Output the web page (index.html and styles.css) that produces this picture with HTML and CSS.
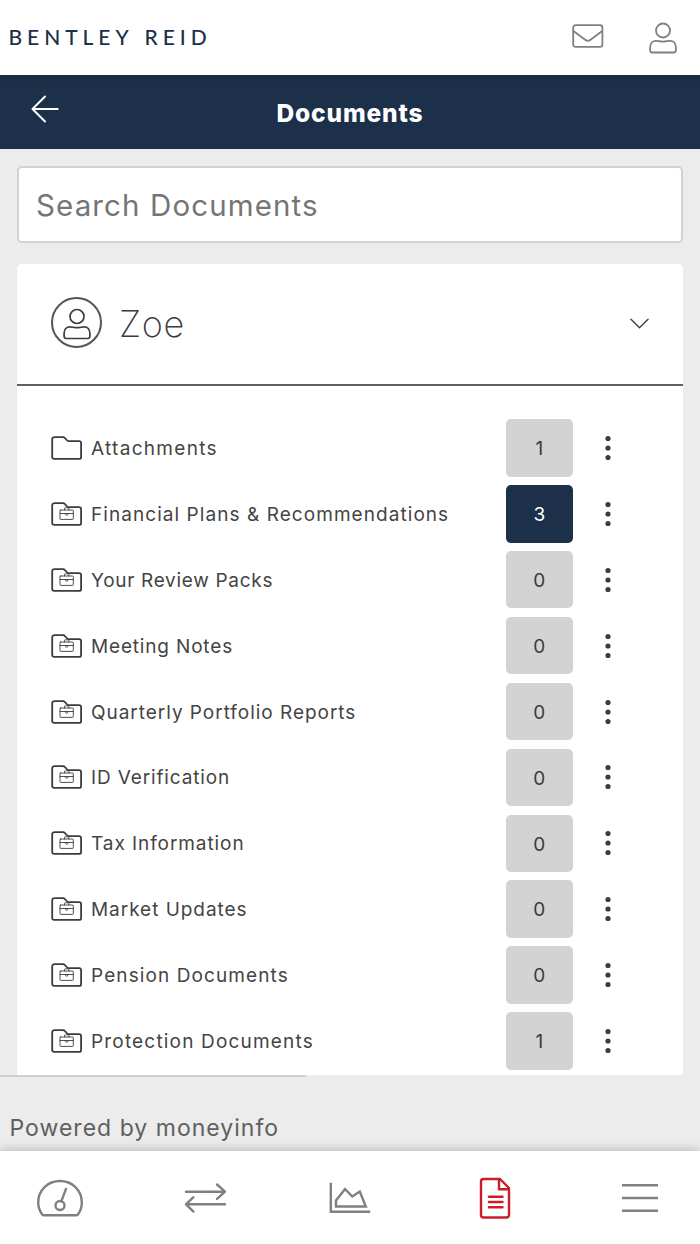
FILE: index.html
```html
<!DOCTYPE html>
<html lang="en">
<head>
<meta charset="utf-8">
<title>Documents</title>
<link rel="stylesheet" href="styles.css">
</head>
<body>
<svg class="defs" width="0" height="0" aria-hidden="true">
  <symbol id="folder" viewBox="0 0 32 26"><path d="M3.800 2.200h8.300q1 0 1.600.7l2.500 2.600q.6.7 1.600.7h10.300q2 0 2 2v13.700q0 2-2 2H3.200q-2 0-2-2V4.200q0-2 2.600-2z"/></symbol>
  <symbol id="folder-case" viewBox="0 0 32 26"><path d="M3.800 2.200h8.300q1 0 1.600.7l2.500 2.600q.6.7 1.600.7h10.300q2 0 2 2v13.700q0 2-2 2H3.200q-2 0-2-2V4.200q0-2 2.600-2z"/><path class="thin" d="M9.700 9h11.900q.7 0 .7.700v8q0 .7-.7.700H9.700q-.7 0-.7-.7v-8q0-.7.700-.7zM13.500 9V7.600q0-.8.800-.8h2.800q.8 0 .8.800V9M9 12.500h13.300M14.300 12.500q0 1.800 1.400 1.800t1.400-1.800"/></symbol>
  <symbol id="person" viewBox="0 0 28 32"><circle cx="14" cy="8.500" r="7"/><path d="M3.300 30.500h21.400q2.200 0 2.200-2.200v-2.800c0-4-2.500-6.700-5.700-6.700-2.600 0-4 .9-7.200.9s-4.600-.9-7.200-.9c-3.200 0-5.700 2.700-5.700 6.700v2.800q0 2.200 2.200 2.200z"/></symbol>
  <symbol id="dots" viewBox="0 0 6 26"><circle cx="3" cy="3.500" r="2.600"/><circle cx="3" cy="13" r="2.600"/><circle cx="3" cy="22.500" r="2.600"/></symbol>
</svg>
<header class="top">
  <div class="logo">BENTLEY REID</div>
  <div class="top-icons">
    <svg class="icon mail" viewBox="0 0 32 24"><rect x="1.200" y="1.200" width="29.200" height="21.600" rx="2.400"/><path d="M1.500 7l11.600 8.800q2.700 2 5.400 0L30.200 7"/></svg>
    <svg class="icon user"><use href="#person"/></svg>
  </div>
</header>
<div class="title-bar">
  <svg class="back" viewBox="0 0 28 28"><path d="M26.700 14H1.500M14 1.500L1.500 14 14 26.500"/></svg>
  <h1 class="title">Documents</h1>
</div>
<main class="content">
  <div class="search"><span class="search-text">Search Documents</span></div>
  <section class="card">
    <div class="owner">
      <span class="avatar"><svg class="avatar-icon"><use href="#person"/></svg></span>
      <h2 class="name">Zoe</h2>
      <svg class="chevron" viewBox="0 0 20 11"><path d="M1 1l9 9 9-9"/></svg>
    </div>
    <div class="list">
      <div class="row"><svg class="folder"><use href="#folder"/></svg><span class="label l1">Attachments</span><span class="count">1</span><svg class="more"><use href="#dots"/></svg></div>
      <div class="row"><svg class="folder"><use href="#folder-case"/></svg><span class="label l2">Financial Plans &amp; Recommendations</span><span class="count active">3</span><svg class="more"><use href="#dots"/></svg></div>
      <div class="row"><svg class="folder"><use href="#folder-case"/></svg><span class="label l3">Your Review Packs</span><span class="count">0</span><svg class="more"><use href="#dots"/></svg></div>
      <div class="row"><svg class="folder"><use href="#folder-case"/></svg><span class="label l4">Meeting Notes</span><span class="count">0</span><svg class="more"><use href="#dots"/></svg></div>
      <div class="row"><svg class="folder"><use href="#folder-case"/></svg><span class="label l5">Quarterly Portfolio Reports</span><span class="count">0</span><svg class="more"><use href="#dots"/></svg></div>
      <div class="row"><svg class="folder"><use href="#folder-case"/></svg><span class="label l6">ID Verification</span><span class="count">0</span><svg class="more"><use href="#dots"/></svg></div>
      <div class="row"><svg class="folder"><use href="#folder-case"/></svg><span class="label l7">Tax Information</span><span class="count">0</span><svg class="more"><use href="#dots"/></svg></div>
      <div class="row"><svg class="folder"><use href="#folder-case"/></svg><span class="label l8">Market Updates</span><span class="count">0</span><svg class="more"><use href="#dots"/></svg></div>
      <div class="row"><svg class="folder"><use href="#folder-case"/></svg><span class="label l9">Pension Documents</span><span class="count">0</span><svg class="more"><use href="#dots"/></svg></div>
      <div class="row"><svg class="folder"><use href="#folder-case"/></svg><span class="label l10">Protection Documents</span><span class="count">1</span><svg class="more"><use href="#dots"/></svg></div>
    </div>
  </section>
</main>
<footer class="powered"><div class="rule"></div><span class="powered-text">Powered by moneyinfo</span></footer>
<nav class="nav">
  <svg class="nav-icon" viewBox="0 0 50 50"><path d="M7.200 41.500C4.600 37.800 3.200 33.800 3.200 29.500 3.200 17 13 8 25 8s21.800 9 21.800 21.500c0 4.300-1.200 8.300-3.800 12q-.4.700-1.200.700H8.300q-.7 0-1.100-.7z"/><circle cx="25" cy="32.500" r="4.500"/><path d="M26.400 28.200L31 15.800"/></svg>
  <svg class="nav-icon" viewBox="0 0 50 50"><path d="M6 18.700h39M37 11.500l8 7.200-8 7.200M45 31.300H6M13.500 24.200L6 31.300l7.500 7.300"/></svg>
  <svg class="nav-icon square" viewBox="0 0 50 50"><path d="M5.800 9.800v29h39.400M11 33.500v-6l9-11.500 7.300 7.500 7.500-5 6 15z"/></svg>
  <svg class="nav-icon active-icon" viewBox="0 0 50 50"><path d="M13.500 6H30l9 9V42q0 2.500-2.500 2.500h-23Q11 44.500 11 42V8.500Q11 6 13.500 6zM29 6v10.200h10M19 23.800h13.500M19 29h13.500M19 34.200h13.500"/></svg>
  <svg class="nav-icon square" viewBox="0 0 50 50"><path d="M7 12.300h36M7 25h36M7 37.700h36"/></svg>
</nav>
</body>
</html>
```
FILE: styles.css
```css
* { box-sizing: border-box; }
body {
  margin: 0;
  width: 700px;
  height: 1244px;
  overflow: hidden;
  display: flex;
  flex-direction: column;
  background: #ececec;
  color: #3c3c3c;
  font-family: Inter, "Liberation Sans", sans-serif;
}
svg { display: block; flex: none; fill: none; stroke-linecap: round; stroke-linejoin: round; }
h1, h2 { margin: 0; }
.defs { position: absolute; }
.top {
  flex: none;
  height: 74.5px;
  padding: 0 23px 0 8.5px;
  display: flex;
  align-items: center;
  justify-content: space-between;
  background: #fff;
}
.logo {
  font: 500 21px/24px Lato, sans-serif;
  letter-spacing: 4.95px;
  word-spacing: 1.5px;
  color: #1c304a;
  white-space: nowrap;
}
.top-icons { display: flex; align-items: center; gap: 45px; }
.icon { stroke: #808080; stroke-width: 1.8; }
.mail { width: 32px; height: 24px; margin-bottom: 3px; }
.user { width: 28px; height: 32px; margin-top: 1px; }
.title-bar {
  flex: none;
  height: 74.5px;
  display: grid;
  grid-template-columns: 60px 1fr 60px;
  align-items: center;
  background: linear-gradient(#1b2c42, #1c304a 9px);
}
.back { width: 28px; height: 28px; margin: 0 0 6px 31px; stroke: #fff; stroke-width: 2; }
.title {
  font-size: 24.5px;
  line-height: 30px;
  font-weight: 800;
  letter-spacing: .85px;
  text-align: center;
  color: #fff;
  margin-top: 2px;
}
.content { flex: none; height: 926px; padding: 17px 17px 0; }
.search {
  height: 77px;
  display: flex;
  align-items: center;
  padding-left: 17px;
  border: 2px solid #d2d2d2;
  border-radius: 5px;
  background: #fff;
}
.search-text { font-size: 29.5px; letter-spacing: 1.12px; color: #757575; white-space: nowrap; }
.card { height: 811px; margin-top: 21px; border-radius: 5px 5px 0 0; background: #fff; }
.owner {
  height: 121.5px;
  padding: 0 34px;
  display: flex;
  align-items: center;
  border-bottom: 2px solid #606060;
}
.avatar {
  width: 51px;
  height: 51px;
  display: flex;
  align-items: center;
  justify-content: center;
  border: 2px solid #555;
  border-radius: 50%;
  margin-bottom: 2px;
}
.avatar-icon { width: 28px; height: 32px; margin-top: 3px; stroke: #3c3c3c; stroke-width: 1.7; }
.name { flex: 1; margin-left: 17px; font-size: 36px; line-height: 44px; font-weight: 200; letter-spacing: .6px; }
.chevron { width: 19px; height: 11px; margin-bottom: 1px; stroke: #3c3c3c; stroke-width: 1.4; }
.list { padding: 29.5px 0 0 34px; }
.row { height: 65.9px; display: flex; align-items: center; }
.folder { width: 32px; height: 26px; margin-right: 8px; stroke: #3c3c3c; stroke-width: 1.8; }
.thin { stroke-width: .9; }
.label {
  flex: none;
  width: 414.5px;
  padding-top: 2px;
  font-size: 19px;
  line-height: 28px;
  color: #444;
  white-space: nowrap;
}
.l1 { letter-spacing: 1.3px; }
.l2 { letter-spacing: 1.06px; }
.l3 { letter-spacing: .7px; }
.l4 { letter-spacing: .83px; }
.l5 { letter-spacing: .97px; }
.l6 { letter-spacing: .86px; }
.l7 { letter-spacing: .93px; }
.l8 { letter-spacing: .96px; }
.l9 { letter-spacing: 1.1px; }
.l10 { letter-spacing: 1.18px; }
.count {
  width: 67.5px;
  height: 57.5px;
  border-radius: 5px;
  background: #d3d3d3;
  font-size: 19px;
  line-height: 60px;
  text-align: center;
}
.active { background: #1c304a; color: #fff; }
.more { width: 6px; height: 26px; margin-left: 32px; fill: #3c3c3c; }
.powered { flex: none; height: 76px; }
.rule { width: 306px; height: 2px; background: #d0d0d0; }
.powered-text {
  display: block;
  margin: 36px 0 0 9.5px;
  font-size: 23px;
  line-height: 30px;
  letter-spacing: 1.02px;
  color: #5f5f5f;
}
.nav {
  flex: none;
  height: 93px;
  padding: 0 35px;
  display: flex;
  align-items: center;
  justify-content: space-between;
  background: #fff;
  box-shadow: 0 0 11px rgba(0, 0, 0, .28);
}
.nav-icon { width: 50px; height: 50px; stroke: #808080; stroke-width: 2.4; }
.square { stroke-linecap: butt; stroke-linejoin: miter; }
.active-icon { stroke: #cb1c29; }
```
